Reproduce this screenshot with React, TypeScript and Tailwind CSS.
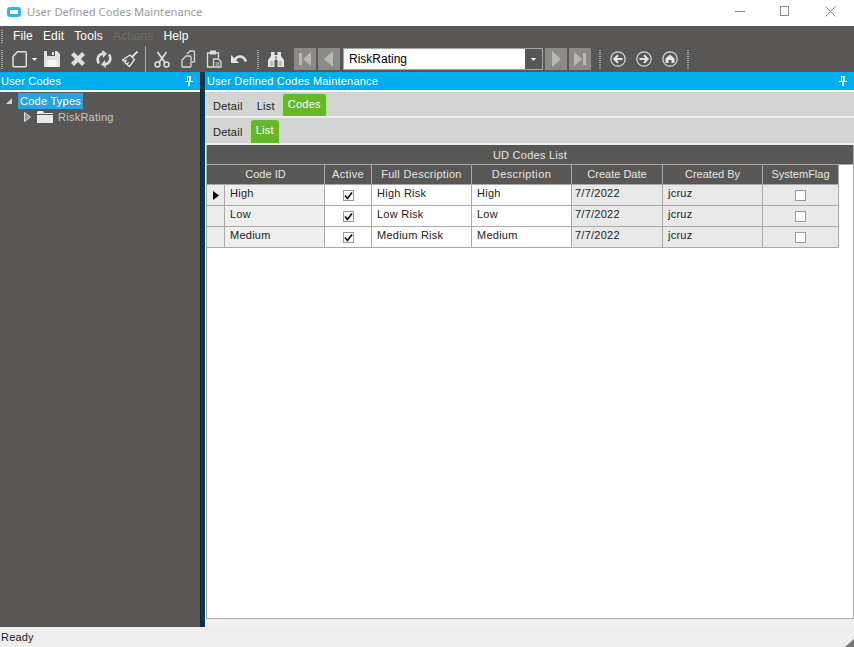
import React from 'react';

const columns = [
  { label: 'Code ID', w: 'w-[118px]' },
  { label: 'Active', w: 'w-[47px] tracking-[0.3px]' },
  { label: 'Full Description', w: 'w-[100px] tracking-[0.3px]' },
  { label: 'Description', w: 'w-[100px] tracking-[0.4px]' },
  { label: 'Create Date', w: 'w-[91px]' },
  { label: 'Created By', w: 'w-[100px]' },
  { label: 'SystemFlag', w: 'w-[76px]' },
];

const rows = [
  { id: 'High', full: 'High Risk', desc: 'High' },
  { id: 'Low', full: 'Low Risk', desc: 'Low' },
  { id: 'Medium', full: 'Medium Risk', desc: 'Medium' },
];

const Grip = () => (
  <div className="h-[19px] w-[2px] bg-[repeating-linear-gradient(to_bottom,#a8a8a8_0,#a8a8a8_1px,transparent_1px,transparent_2px)]" />
);

const Icon = ({ w = 16, children }: { w?: number; children: React.ReactNode }) => (
  <svg width={w} height="20" viewBox={`0 0 ${w} 20`} className="shrink-0">
    {children}
  </svg>
);

const NavBtn = ({ flip, bar }: { flip?: boolean; bar?: boolean }) => (
  <div className="flex h-[22px] w-[22px] items-center justify-center bg-[#8b8a88]">
    <svg width="16" height="16" viewBox="0 0 16 16" className={flip ? 'rotate-180' : ''}>
      {bar && <rect x="2" y="2" width="3" height="12" fill="#b9b8b6" />}
      <path d={bar ? 'M14 1v14L6 8z' : 'M12 0v16L3 8z'} fill="#b9b8b6" />
    </svg>
  </div>
);

const CircleIcon = ({ children }: { children: React.ReactNode }) => (
  <svg width="16" height="16" viewBox="0 0 16 16" className="shrink-0">
    <circle cx="8" cy="8" r="7.2" fill="none" stroke="#d8d8d8" strokeWidth="1.2" />
    {children}
  </svg>
);

const PinIcon = () => (
  <svg width="8" height="10" viewBox="0 0 8 10">
    <path d="M2 0h4v5h2v1H5v4H3V6H0V5h2z" fill="#fff" />
    <rect x="3" y="1" width="1" height="4" fill="#00aeef" />
  </svg>
);

const Toolbar = () => (
  <div className="flex h-[26px] items-center bg-[#595755] pl-[1px]">
    <Grip />
    <div className="ml-[9px]">
      <Icon w={15}>
        <path d="M5.500 2.700h7.800a1 1 0 0 1 1 1v13a1 1 0 0 1-1 1H2a1 1 0 0 1-1-1V7.500z" fill="none" stroke="#e4e4e4" strokeWidth="1.4" />
      </Icon>
    </div>
    <svg width="5" height="3" viewBox="0 0 5 3" className="ml-[5px]">
      <path d="M0 0h5L2.500 3z" fill="#fff" />
    </svg>
    <div className="ml-[7px]">
      <Icon>
        <path d="M0 2h13l3 3v13H0z" fill="#e0e0e0" />
        <rect x="3" y="2" width="8" height="5" fill="#595755" />
        <rect x="3" y="11" width="10" height="7" fill="#f4f4f4" />
        <rect x="8" y="3" width="2" height="3" fill="#e0e0e0" />
      </Icon>
    </div>
    <div className="ml-[11px]">
      <Icon w={14}>
        <path d="M0 6l3-3 4 4 4-4 3 3-4 4 4 4-3 3-4-4-4 4-3-3 4-4z" fill="#dedede" />
      </Icon>
    </div>
    <div className="ml-[11px]">
      <Icon>
        <path d="M3 14.500C.5 11 1.500 5.500 7 4.500M13 5.500c2.500 3.500 1.500 9-4 10" fill="none" stroke="#dedede" strokeWidth="2.600" />
        <path d="M6 1l5 3.500L7 9zM10 19l-5-3.500 4-4.500z" fill="#dedede" />
      </Icon>
    </div>
    <div className="ml-[10px]">
      <Icon>
        <path d="M15.500 2.500l-5.500 5.500" stroke="#e2e2e2" strokeWidth="1.800" />
        <path d="M8 6l4.500 4.500-5 7-2-1.500.5-2-2 1-1-1.500 1-2-2.500.5-1-1z" fill="none" stroke="#e2e2e2" strokeWidth="1.300" />
      </Icon>
    </div>
    <div className="ml-[7px] h-[26px] w-px bg-[#a8a8a8]" />
    <div className="ml-[8px]">
      <Icon>
        <circle cx="3.500" cy="15.500" r="2.500" fill="none" stroke="#dedede" strokeWidth="1.500" />
        <circle cx="12.500" cy="15.500" r="2.500" fill="none" stroke="#dedede" strokeWidth="1.500" />
        <path d="M5 13.500L12.500 3M11 13.500L3.500 3" stroke="#dedede" strokeWidth="1.700" />
      </Icon>
    </div>
    <div className="ml-[11px]">
      <Icon w={15}>
        <path d="M6 5l3-3h3.500a1 1 0 0 1 1 1v9a1 1 0 0 1-1 1H11M5 7L1 11v6a1 1 0 0 0 1 1h7a1 1 0 0 0 1-1V8a1 1 0 0 0-1-1z" fill="none" stroke="#d8d8d8" strokeWidth="1.300" />
      </Icon>
    </div>
    <div className="ml-[10px]">
      <Icon>
        <path d="M4 4H1.500v14H7" fill="none" stroke="#d8d8d8" strokeWidth="1.400" />
        <path d="M10 4h2.500v5" fill="none" stroke="#d8d8d8" strokeWidth="1.400" />
        <rect x="4" y="1.500" width="6" height="4" fill="#dedede" />
        <path d="M7.500 10h5l2.500 2.500V18H7.500z" fill="none" stroke="#d8d8d8" strokeWidth="1.300" />
        <path d="M9.500 14h4M9.500 16h4" stroke="#d8d8d8" />
      </Icon>
    </div>
    <div className="ml-[9px]">
      <Icon>
        <path d="M4 10.500c3-4.500 8.500-4 11 2" fill="none" stroke="#e4e4e4" strokeWidth="2.600" />
        <path d="M0 6v8h8z" fill="#e4e4e4" />
      </Icon>
    </div>
    <div className="ml-[10px]">
      <Grip />
    </div>
    <div className="ml-[9px]">
      <Icon>
        <path d="M3 3h3.500v3h3V3H13v4l3 4v7h-6.500v-7h-3v7H0v-7l3-4z" fill="#e4e4e4" />
        <rect x="7.500" y="7" width="1" height="4" fill="#595755" />
        <rect x="2" y="12" width="3" height="5" fill="#bdbdbd" />
        <rect x="11" y="12" width="3" height="5" fill="#bdbdbd" />
      </Icon>
    </div>
    <div className="ml-[10px]">
      <NavBtn bar />
    </div>
    <div className="ml-[2px]">
      <NavBtn />
    </div>
    <div className="ml-[3px] flex h-[22px] w-[200px] border border-[#a5a5a5] bg-white">
      <span className="flex-1 pl-[5px] text-[12px] leading-[20px] text-black">RiskRating</span>
      <div className="flex w-[17px] items-center justify-center bg-[#595755]">
        <svg width="5" height="3" viewBox="0 0 5 3">
          <path d="M0 0h5L2.500 3z" fill="#fff" />
        </svg>
      </div>
    </div>
    <div className="ml-[2px]">
      <NavBtn flip />
    </div>
    <div className="ml-[2px]">
      <NavBtn flip bar />
    </div>
    <div className="ml-[8px]">
      <Grip />
    </div>
    <div className="ml-[9px] flex gap-[10px]">
      <CircleIcon>
        <path d="M4 8h8.500M8 4.300L4.300 8 8 11.700" fill="none" stroke="#e6e6e6" strokeWidth="2" />
      </CircleIcon>
      <CircleIcon>
        <path d="M3.500 8H12M8 4.300L11.700 8 8 11.700" fill="none" stroke="#e6e6e6" strokeWidth="2" />
      </CircleIcon>
      <CircleIcon>
        <path d="M8 3.500l4.500 4v4.500H9.500V9h-3v3H3.500V7.500z" fill="#e6e6e6" />
      </CircleIcon>
    </div>
    <div className="ml-[9px]">
      <Grip />
    </div>
  </div>
);

const PanelHeader = ({ title, inset }: { title: string; inset?: boolean }) => (
  <div className={`flex h-[18px] items-center justify-between bg-[#00aeef] ${inset ? 'pl-[2px]' : 'pl-[1px]'} pr-[7px] text-[11px] text-white`}>
    <span className="tracking-[0.2px]">{title}</span>
    <PinIcon />
  </div>
);

const TabStrip = ({ items, active, h }: { items: string[]; active: string; h: string }) => (
  <div className={`flex ${h} items-stretch bg-[#d4d4d4] pt-[1px] text-[11px] leading-[16px] tracking-[0.25px]`}>
    {items.map((tab) =>
      tab === active ? (
        <div
          key={tab}
          className="ml-[1px] rounded-t-[4px] border border-b-0 border-[#b4ee80] bg-[#66b82a] px-[5px] pt-[2px] text-white"
        >
          {tab}
        </div>
      ) : (
        <div key={tab} className="pl-[8px] pr-[6px] pt-[5px] text-[#222]">
          {tab}
        </div>
      )
    )}
  </div>
);

const CheckBox = ({ checked }: { checked?: boolean }) => (
  <div className="flex h-[11px] w-[11px] items-center justify-center border border-[#9a9a9a] bg-white">
    {checked && (
      <svg width="9" height="9" viewBox="0 0 9 9">
        <path d="M1 4.500l2.500 3L8 1.500" fill="none" stroke="#111" strokeWidth="1.700" />
      </svg>
    )}
  </div>
);

export default function App() {
  return (
    <div className="flex h-[647px] w-[854px] flex-col overflow-hidden bg-white font-['Liberation_Sans',sans-serif]">
      {/* title bar */}
      <div className="flex h-[26px] items-center bg-white pb-[2px]">
        <div className="ml-[7px] h-[10px] w-[14px] rounded-[3px] border-[3px] border-[#2fb4e6] bg-white" />
        <span className="ml-[6px] font-['Noto_Sans',sans-serif] text-[11.2px] text-[#9b9b9b]">
          User Defined Codes Maintenance
        </span>
        <div className="ml-auto flex items-center pb-[2px]">
          <div className="h-px w-[10px] bg-[#8a8a8a]" />
          <div className="ml-[35px] h-[10px] w-[9px] border border-[#8a8a8a]" />
          <svg width="11" height="11" viewBox="0 0 11 11" className="ml-[36px] mr-[18px]">
            <path d="M.5.5l10 10M10.500.5l-10 10" stroke="#8a8a8a" strokeWidth="1" />
          </svg>
        </div>
      </div>

      {/* menu */}
      <div className="flex h-[20px] items-center bg-[#595755] pl-[1px]">
        <div className="h-[13px] w-[2px] bg-[repeating-linear-gradient(to_bottom,#a8a8a8_0,#a8a8a8_1px,transparent_1px,transparent_2px)]" />
        <div className="ml-[10px] flex gap-[10px] text-[12px] tracking-[0.15px] text-white">
          <span>File</span>
          <span>Edit</span>
          <span>Tools</span>
          <span className="text-[#6f6e6c]">Actions</span>
          <span>Help</span>
        </div>
      </div>

      <Toolbar />

      <div className="flex min-h-0 flex-1">
        {/* left panel */}
        <div className="flex w-[200px] flex-col">
          <PanelHeader title="User Codes" />
          <div className="h-[2px] bg-white" />
          <div className="flex-1 bg-[#595755] text-[11px] tracking-[0.25px]">
            <div className="flex h-[17px] items-center">
              <svg width="6" height="6" viewBox="0 0 6 6" className="ml-[6px]">
                <path d="M6 0v6H0z" fill="#cfcfcf" />
              </svg>
              <span className="ml-[6px] bg-[#2ba3dc] px-[2px] leading-[16px] text-white">Code Types</span>
            </div>
            <div className="flex h-[16px] items-center">
              <svg width="7" height="10" viewBox="0 0 7 10" className="ml-[24px]">
                <path d="M.5.500l6 4.500-6 4.500z" fill="#9a9a98" stroke="#e0e0e0" />
              </svg>
              <svg width="17" height="12" viewBox="0 0 17 12" className="ml-[6px]">
                <path d="M1 0h5l1 2h9v10H0V1z" fill="#e8e8e8" />
                <rect x="0" y="3" width="17" height="1" fill="#595755" />
              </svg>
              <span className="ml-[4px] text-[#c8c8c8]">RiskRating</span>
            </div>
          </div>
        </div>

        {/* splitter */}
        <div className="w-[5px] border-l border-[#222] bg-[#003a5c]" />

        {/* right panel */}
        <div className="flex flex-1 flex-col">
          <PanelHeader title="User Defined Codes Maintenance" inset />
          <div className="h-[2px] bg-white" />
          <TabStrip items={['Detail', 'List', 'Codes']} active="Codes" h="h-[24px]" />
          <div className="h-[2px] bg-[#eeeeee]" />
          <TabStrip items={['Detail', 'List']} active="List" h="h-[25px]" />
          <div className="h-[2px] bg-[#eeeeee]" />

          <div className="ml-[1px] flex-1 border-x border-b border-[#a9a9a9] bg-white">
            <div className="flex h-[20px] items-center justify-center border-b border-[#a9a9a9] bg-[#595755] pt-[1px] text-[11px] tracking-[0.25px] text-[#e6e6e6]">
              UD Codes List
            </div>
            <div className="flex h-[19px] w-fit bg-[#595755] text-[11px] text-[#e6e6e6]">
              {columns.map((c) => (
                <div key={c.label} className={`${c.w} shrink-0 border-r border-[#a9a9a9] text-center leading-[19px]`}>
                  {c.label}
                </div>
              ))}
            </div>
            {rows.map((r, i) => (
              <div
                key={r.id}
                className="flex h-[21px] w-fit border-t border-[#a9a9a9] text-[11px] tracking-[0.25px] text-[#222] last:h-[22px] last:border-b"
              >
                <div className="flex w-[18px] shrink-0 items-center justify-center border-r border-[#a9a9a9] bg-[#ececec]">
                  {i === 0 && (
                    <svg width="6" height="9" viewBox="0 0 6 9">
                      <path d="M0 0l6 4.500L0 9z" fill="#000" />
                    </svg>
                  )}
                </div>
                <div className="w-[100px] shrink-0 border-r border-[#a9a9a9] bg-[#efefef] pl-[5px] leading-[17px]">{r.id}</div>
                <div className="flex w-[47px] shrink-0 items-center justify-center border-r border-[#a9a9a9] bg-white pt-[1px]">
                  <CheckBox checked />
                </div>
                <div className="w-[100px] shrink-0 border-r border-[#a9a9a9] bg-white pl-[5px] leading-[17px]">{r.full}</div>
                <div className="w-[100px] shrink-0 border-r border-[#a9a9a9] bg-white pl-[5px] leading-[17px]">{r.desc}</div>
                <div className="w-[91px] shrink-0 border-r border-[#a9a9a9] bg-[#e9e9e9] pl-[3px] leading-[17px]">7/7/2022</div>
                <div className="w-[100px] shrink-0 border-r border-[#a9a9a9] bg-[#e9e9e9] pl-[5px] leading-[17px]">jcruz</div>
                <div className="flex w-[76px] shrink-0 items-center justify-center border-r border-[#a9a9a9] bg-[#e9e9e9] pt-[1px]">
                  <CheckBox />
                </div>
              </div>
            ))}
          </div>
          <div className="h-[8px] bg-[#f1f1f4]" />
        </div>
      </div>

      {/* status bar */}
      <div className="flex h-[20px] items-center justify-between bg-[#eeeeee] pl-[1px] pt-[1px] text-[11px] tracking-[0.2px] text-[#222]">
        <span>Ready</span>
        <svg width="9" height="8" viewBox="0 0 9 8" className="self-end">
          <path d="M9 0v8H0z" fill="#777" />
        </svg>
      </div>
    </div>
  );
}
